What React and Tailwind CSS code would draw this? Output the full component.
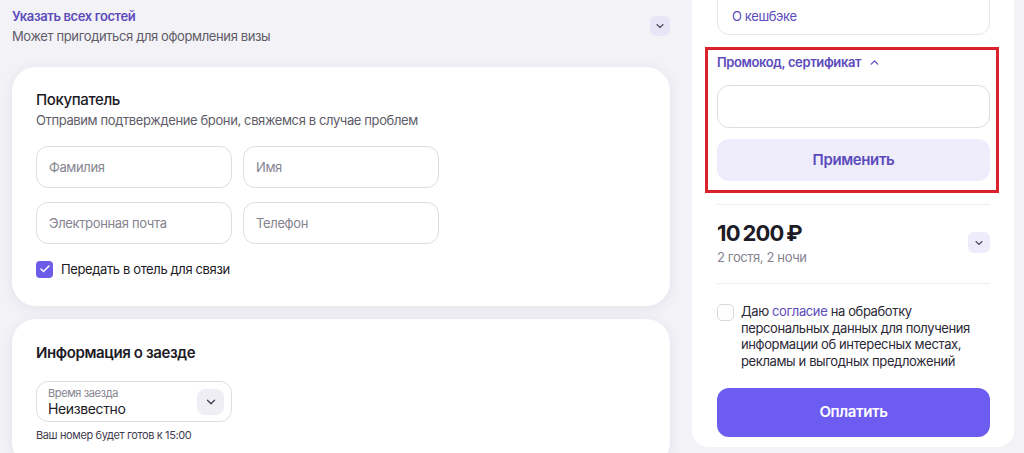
import React, { useState } from 'react';
import { ChevronDown, ChevronUp, Check } from 'lucide-react';

const font = { fontFamily: 'Inter, "Noto Sans", sans-serif' };

const Field = ({ placeholder }) => (
  <input
    type="text"
    placeholder={placeholder}
    className="w-[196px] h-[42px] px-[12px] rounded-[12px] border border-[#dddce3] bg-white text-[13px] tracking-[-0.35px] text-[#1d1b26] placeholder:text-[#85838f] focus:outline-none"
  />
);

const App = () => {
  const [passToHotel, setPassToHotel] = useState(true);
  const [consent, setConsent] = useState(false);

  return (
    <div style={font} className="w-full h-[453px] overflow-hidden bg-[#f3f2f7] flex text-[#1d1b26] tracking-[-0.38px]">
      {/* left column */}
      <div className="w-[692px] shrink-0 pl-3 pr-[22px] pt-[7px]">
        <div className="flex items-center justify-between">
          <div>
            <div className="text-[13px] leading-[18px] font-semibold text-[#5b4bbb]">Указать всех гостей</div>
            <div className="mt-[2px] text-[13px] leading-[18px] text-[#5e5c68]">Может пригодиться для оформления визы</div>
          </div>
          <button className="w-[20px] h-[20px] rounded-[6px] bg-[#e7e5f6] flex items-center justify-center text-[#4c4a62]">
            <ChevronDown size={12} strokeWidth={2.2} />
          </button>
        </div>

        <div className="mt-[22px] bg-white rounded-[24px] shadow-[0_2px_14px_rgba(40,30,90,0.07)] pl-6 pt-[23px] pb-[28px]">
          <div className="text-[15px] leading-[20px] font-medium">Покупатель</div>
          <div className="mt-[1px] text-[13px] leading-[18px] text-[#5e5c68]">Отправим подтверждение брони, свяжемся в случае проблем</div>
          <div className="mt-[17px] flex gap-[11px]">
            <Field placeholder="Фамилия" />
            <Field placeholder="Имя" />
          </div>
          <div className="mt-[14px] flex gap-[11px]">
            <Field placeholder="Электронная почта" />
            <Field placeholder="Телефон" />
          </div>
          <label className="mt-[16px] flex items-center gap-[8px] cursor-pointer">
            <span
              onClick={() => setPassToHotel(!passToHotel)}
              className={`w-[17px] h-[17px] rounded-[4px] flex items-center justify-center ${passToHotel ? 'bg-[#6c5ce7]' : 'border border-[#cfcdd8] bg-white'}`}
            >
              {passToHotel && <Check size={12} strokeWidth={3} className="text-white" />}
            </span>
            <span className="text-[13px] leading-[18px]">Передать в отель для связи</span>
          </label>
        </div>

        <div className="mt-[13px] bg-white rounded-[24px] shadow-[0_2px_14px_rgba(40,30,90,0.07)] pl-6 pt-[24px] pb-6">
          <div className="text-[15px] leading-[20px] font-semibold">Информация о заезде</div>
          <div className="mt-[18px] w-[196px] h-[41px] rounded-[12px] border border-[#dddce3] flex items-center justify-between pl-[11px] pr-[7px]">
            <div>
              <div className="text-[11px] leading-[13px] text-[#85838f]">Время заезда</div>
              <div className="text-[14px] leading-[17px]">Неизвестно</div>
            </div>
            <span className="w-[27px] h-[26px] rounded-[8px] bg-[#efeef4] flex items-center justify-center text-[#3f3d4e]">
              <ChevronDown size={14} strokeWidth={2.2} />
            </span>
          </div>
          <div className="mt-[6px] text-[11px] leading-[14px] text-[#3f3d4e]">Ваш номер будет готов к 15:00</div>
        </div>
      </div>

      {/* right panel */}
      <div className="w-[322px] h-[447px] shrink-0 bg-white rounded-b-[16px] pl-[25px] pr-[24px]">
        <div className="-mt-[40px] h-[75px] rounded-b-[12px] border border-[#e1e6f0] px-[14px] flex flex-col justify-end pb-[9px]">
          <div className="ml-[62px] w-[32px] h-[3px] rounded-b-[6px] bg-[#e9c9a0]"></div>
          <div className="mt-[7px] text-[13px] leading-[18px] text-[#5b4bbb]">О кешбэке</div>
        </div>

        <div className="mt-[12px] -ml-[12px] -mr-[9px] border-[3px] border-[#d9222c] pl-[9px] pr-[6px] pt-[3px] pb-[9px]">
          <div className="flex items-center gap-[7px] text-[13px] leading-[18px] font-semibold text-[#5b4bbb]">
            Промокод, сертификат
            <ChevronUp size={13} strokeWidth={2.4} />
          </div>
          <input
            type="text"
            className="mt-[14px] w-full h-[43px] rounded-[12px] border border-[#dddce3] px-3 text-[14px] focus:outline-none"
          />
          <button className="mt-[11px] w-full h-[42px] rounded-[12px] bg-[#efedfc] text-[15px] font-semibold text-[#5b4bbb]">
            Применить
          </button>
        </div>

        <div className="mt-[11px] h-px bg-[#ecebf1]"></div>

        <div className="mt-[14px] flex items-center justify-between">
          <div>
            <div className="text-[22px] leading-[28px] font-bold tracking-[-0.8px]">10{'\u2009'}200{'\u2009'}₽</div>
            <div className="mt-px text-[13px] leading-[18px] text-[#85838f]">2 гостя, 2 ночи</div>
          </div>
          <button className="w-[22px] h-[21px] rounded-[6px] bg-[#eeecfa] flex items-center justify-center text-[#4c4a62]">
            <ChevronDown size={12} strokeWidth={2.2} />
          </button>
        </div>

        <div className="mt-[17px] h-px bg-[#ecebf1]"></div>

        <div className="mt-[19px] flex items-start gap-[7px]">
          <span
            onClick={() => setConsent(!consent)}
            className={`mt-px w-[17px] h-[17px] shrink-0 rounded-[5px] flex items-center justify-center cursor-pointer ${consent ? 'bg-[#6c5ce7]' : 'border border-[#d9d8e0] bg-white'}`}
          >
            {consent && <Check size={12} strokeWidth={3} className="text-white" />}
          </span>
          <p className="text-[13px] leading-[16.5px] text-[#2b2936]">
            Даю <a className="text-[#5b4bbb]">согласие</a> на обработку персональных данных для получения информации об интересных местах, рекламы и выгодных предложений
          </p>
        </div>

        <button className="mt-[19px] w-full h-[49px] rounded-[12px] bg-[#6c5cf0] text-white text-[15px] font-semibold">
          Оплатить
        </button>
      </div>

      <div className="flex-1 bg-[#f3f2f7]"></div>
    </div>
  );
};

export default App;
